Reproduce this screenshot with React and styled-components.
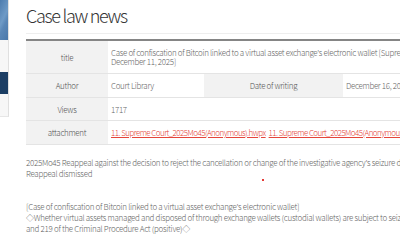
import React from 'react';
import styled, { createGlobalStyle } from 'styled-components';

const Global = createGlobalStyle`
  html, body { margin: 0; padding: 0; background: #fff; overflow: hidden; }
  body { font-family: "Noto Sans CJK KR", "Noto Sans", sans-serif; color: #666; }
`;

const Page = styled.div`
  display: flex;
  align-items: flex-start;
  width: 760px;
`;

const Sidebar = styled.aside`
  flex-shrink: 0;
  width: 8px;
  display: flex;
  flex-direction: column;
  border-right: 1px solid #e0e0e0;
  border-bottom: 1px solid #e6e6e6;
`;

const Banner = styled.div`
  height: 40px;
  background: linear-gradient(115deg, #4d7cae 0%, #6e9ac6 45%, #5a87b7 60%, #4a78aa 100%);
`;

const NavItem = styled.div`
  height: ${p => p.$h}px;
  background: ${p => (p.$active ? '#1c3e64' : '#f7f7f7')};
`;

const Main = styled.main`
  position: relative;
  margin-left: 17px;
  width: 700px;
`;

const Title = styled.h2`
  margin: 0;
  padding: 3px 0 6px;
  font-size: 18px;
  line-height: 24px;
  font-weight: 300;
  letter-spacing: -1.3px;
  color: #333;
  border-bottom: 1px solid #eee;
`;

const Table = styled.div`
  margin-top: 5px;
  border-top: 2px solid #858585;
  font-size: 8px;
  font-weight: 300;
  letter-spacing: -0.33px;
`;

const Row = styled.div`
  display: flex;
  height: ${p => p.$h}px;
  border-bottom: 1px solid #e4e4e4;
`;

const HeadCell = styled.div`
  flex-shrink: 0;
  width: ${p => p.$w}px;
  display: flex;
  align-items: center;
  justify-content: center;
  background: #f2f2f2;
  color: #555;
`;

const ValueCell = styled.div`
  flex-shrink: 0;
  width: ${p => p.$w || 500}px;
  display: flex;
  flex-direction: column;
  justify-content: center;
  align-items: flex-start;
  padding-left: 3px;
  line-height: 9px;
  white-space: nowrap;
  color: #666;
`;

const Links = styled.div`
  display: flex;
  gap: 3px;
`;

const FileLink = styled.a`
  color: #e5453a;
  text-decoration: underline;
  letter-spacing: -0.55px;
`;

const Body = styled.div`
  position: relative;
  margin-top: 12px;
  font-size: 8px;
  font-weight: 300;
  line-height: 11.4px;
  letter-spacing: -0.3px;
  white-space: nowrap;
  color: #666;
`;

const Para = styled.p`
  margin: 0 0 ${p => p.$gap || 0}px;
`;

const Dot = styled.span`
  position: absolute;
  left: 236px;
  top: 22px;
  width: 2px;
  height: 2px;
  background: #e53935;
`;

export default function App() {
  return (
    <>
      <Global />
      <Page>
        <Sidebar>
          <Banner />
          <NavItem $h={32} />
          <NavItem $h={22} $active />
          <NavItem $h={22} />
        </Sidebar>
        <Main>
          <Title>Case law news</Title>
          <Table>
            <Row $h={32}>
              <HeadCell $w={82}>title</HeadCell>
              <ValueCell>
                <span>Case of confiscation of Bitcoin linked to a virtual asset exchange's electronic wallet [Supreme Court 2025Mo45,</span>
                <span>December 11, 2025]</span>
              </ValueCell>
            </Row>
            <Row $h={23}>
              <HeadCell $w={82}>Author</HeadCell>
              <ValueCell $w={93}>Court Library</ValueCell>
              <HeadCell $w={139}>Date of writing</HeadCell>
              <ValueCell $w={200}>December 16, 2025</ValueCell>
            </Row>
            <Row $h={22}>
              <HeadCell $w={82}>Views</HeadCell>
              <ValueCell>1717</ValueCell>
            </Row>
            <Row $h={23}>
              <HeadCell $w={82}>attachment</HeadCell>
              <ValueCell>
                <Links>
                  <FileLink href="#">11. Supreme Court_2025Mo45(Anonymous).hwpx</FileLink>
                  <FileLink href="#">11. Supreme Court_2025Mo45(Anonymous).pdf</FileLink>
                </Links>
              </ValueCell>
            </Row>
          </Table>
          <Body>
            <Para $gap={20.8}>
              2025Mo45 Reappeal against the decision to reject the cancellation or change of the investigative agency's seizure disposition
              <br />
              Reappeal dismissed
            </Para>
            <Dot />
            <Para>
              [Case of confiscation of Bitcoin linked to a virtual asset exchange's electronic wallet]
              <br />
              ◇Whether virtual assets managed and disposed of through exchange wallets (custodial wallets) are subject to seizure under Articles 106
              <br />
              and 219 of the Criminal Procedure Act (positive)◇
            </Para>
          </Body>
        </Main>
      </Page>
    </>
  );
}
